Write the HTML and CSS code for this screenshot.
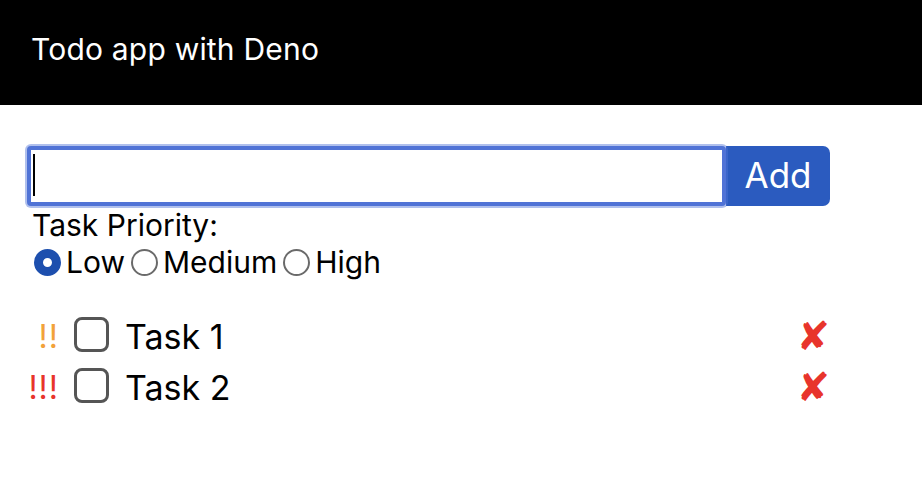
FILE: index.html
```html
<!DOCTYPE html>
<html>
<head>
<meta charset="utf-8">
<link rel="stylesheet" href="styles.css">
</head>
<body>
<header class="bar"><h1 class="title">Todo app with Deno</h1></header>
<main class="content">
  <form class="add-form">
    <div class="input-row">
      <div class="field">
        <input class="task-input" type="text" autofocus>
        <span class="caret"></span>
      </div>
      <button class="add-btn" type="button">Add</button>
    </div>
    <div class="prio-label">Task Priority:</div>
    <div class="prio-row">
      <label class="radio"><span class="dot checked"></span>Low</label>
      <label class="radio"><span class="dot"></span>Medium</label>
      <label class="radio"><span class="dot"></span>High</label>
    </div>
  </form>
  <ul class="tasks">
    <li class="task">
      <span class="prio orange">!!</span>
      <span class="box"></span>
      <span class="name">Task 1</span>
      <span class="del">✘</span>
    </li>
    <li class="task">
      <span class="prio red">!!!</span>
      <span class="box"></span>
      <span class="name">Task 2</span>
      <span class="del">✘</span>
    </li>
  </ul>
</main>
</body>
</html>
```

FILE: styles.css
```css
html, body {
  margin: 0;
  padding: 0;
  background: #fff;
  font-family: Inter, "Noto Sans", sans-serif;
  color: #000;
}
.bar {
  background: #000;
  height: 105px;
  display: flex;
  align-items: center;
  padding-left: 31px;
  box-sizing: border-box;
}
.title {
  margin: 0;
  color: #fff;
  font-weight: 400;
  font-size: 30px;
  letter-spacing: 0.2px;
  padding-bottom: 7px;
}
.content {
  padding: 41px 0 0 28px;
}
.add-form {
  margin: 0;
}
.input-row {
  display: flex;
  align-items: flex-start;
}
.field {
  position: relative;
  margin-left: -1px;
  height: 60px;
}
.task-input {
  display: block;
  width: 699px;
  height: 60px;
  box-sizing: border-box;
  margin: 0;
  border: 4px solid #5073d6;
  border-radius: 4px;
  box-shadow: 0 0 0 2px rgba(80, 115, 214, 0.45);
  outline: none;
  padding: 0 6px;
  font-size: 30px;
  font-family: inherit;
  background: #fff;
}
.caret {
  position: absolute;
  left: 6px;
  top: 8px;
  width: 2px;
  height: 42px;
  background: #000;
}
.add-btn {
  width: 104px;
  height: 60px;
  margin: 0;
  border: none;
  background: #2b5bbf;
  color: #fff;
  font-family: inherit;
  font-size: 35px;
  border-radius: 0 7px 7px 0;
  padding: 0 0 2px 0;
}
.prio-label {
  font-size: 30px;
  line-height: 34px;
  margin-top: 2px;
  padding-left: 4px;
}
.prio-row {
  display: flex;
  padding-left: 6px;
  font-size: 30px;
  line-height: 40px;
}
.radio {
  display: flex;
  align-items: center;
}
.dot {
  width: 27px;
  height: 27px;
  box-sizing: border-box;
  border: 2px solid #6a6a6a;
  border-radius: 50%;
  margin: 1px 5px 0 6px;
}
.radio:first-child .dot {
  margin-left: 0;
}
.dot.checked {
  border: 9.5px solid #1d4fae;
  background: #fff;
}
.tasks {
  list-style: none;
  margin: 29px 0 0 0;
  padding: 0;
  width: 802px;
}
.task {
  display: flex;
  align-items: center;
  height: 51px;
  line-height: 51px;
}
.prio {
  width: 31px;
  text-align: right;
  font-size: 32px;
  font-weight: 400;
  letter-spacing: 1px;
  box-sizing: border-box;
}
.orange { color: #f2a23a; }
.red { color: #e8342b; }
.box {
  width: 35px;
  height: 35px;
  box-sizing: border-box;
  border: 3px solid #555;
  border-radius: 8px;
  margin-left: 15px;
  margin-bottom: 5px;
}
.name {
  flex: 1;
  font-size: 34px;
  margin-left: 16px;
}
.del {
  color: #e8342b;
  font-size: 40px;
  font-family: "DejaVu Sans", sans-serif;
  font-weight: 700;
}
```
